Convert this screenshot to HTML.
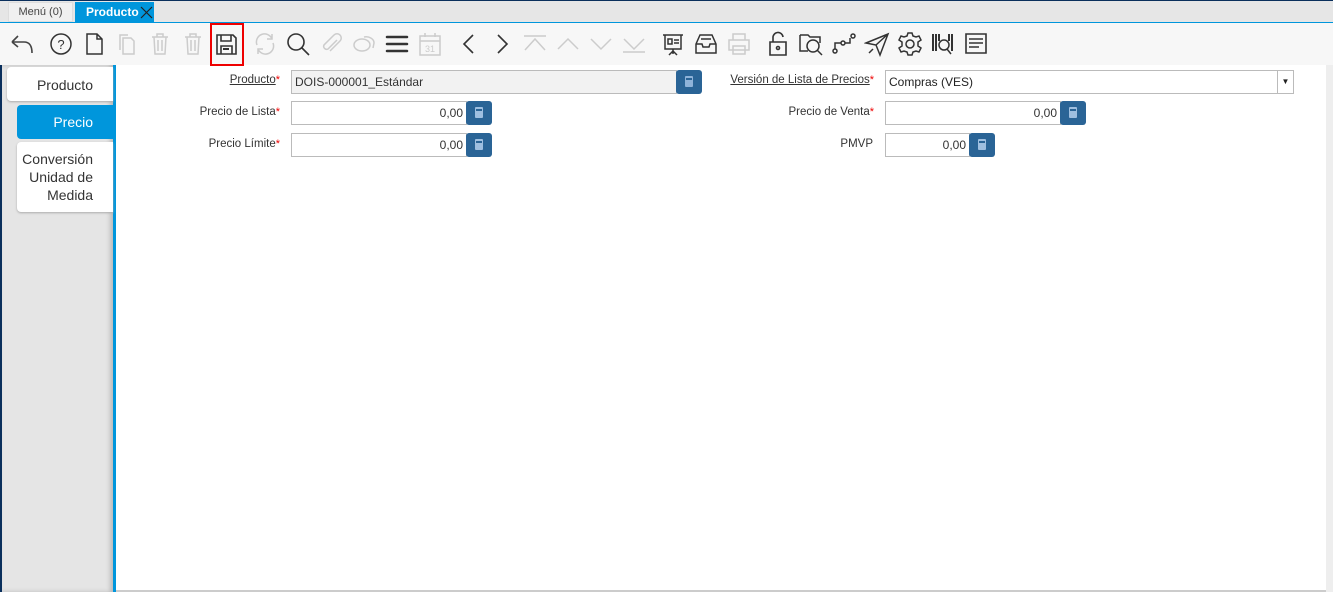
<!DOCTYPE html>
<html><head><meta charset="utf-8"><style>
*{box-sizing:border-box;margin:0;padding:0}
body{width:1333px;height:592px;overflow:hidden;background:#fff;font-family:"Liberation Sans",sans-serif;font-size:12px;color:#333;position:relative}
.a{position:absolute}
.tb svg{position:absolute;width:26px;height:26px;top:31px}
.lbl{position:absolute;text-align:right;font-size:11.5px;color:#333}
.lbl u{text-decoration:underline}
.req{color:#e00;font-size:11px;vertical-align:top}
.fld{position:absolute;border:1px solid #bbb;background:#fff;height:24px;font-size:12px;line-height:22px;padding:0 3px}
.btn{position:absolute;background:#2a6496;border-radius:3px;width:26px;height:24px}
.btn i{position:absolute;left:9px;top:6px;width:8px;height:11px;background:#9fbfe0;border-radius:1px}
.btn i:after{content:"";position:absolute;left:1px;top:2px;width:6px;height:2px;background:#2a6496}
</style></head><body>
<div class="a" style="left:0;top:0;width:1333px;height:1px;background:#0a2f5c"></div>
<div class="a" style="left:0;top:1px;width:1333px;height:21px;background:#e6e6e6"></div>
<div class="a" style="left:8px;top:2px;width:65px;height:20px;background:#f0f0f0;border:1px solid #ddd;font-size:11px;line-height:19px;text-align:center;color:#444">Menú (0)</div>
<div class="a" style="left:75px;top:2px;width:79px;height:20px;background:#0096dc;color:#fff;font-weight:bold;font-size:12px;line-height:20px;padding-left:11px">Producto<svg style="position:absolute;left:65px;top:4px" width="13" height="13" viewBox="0 0 13 13" stroke="#222" stroke-width="1.2"><path d="M1 1 L12 12 M12 1 L1 12"/></svg></div>
<div class="a" style="left:0;top:22px;width:1333px;height:1px;background:#0096dc"></div>
<div class="a" style="left:0;top:23px;width:1333px;height:42px;background:#f7f7f7"></div>
<div class="a" style="left:210px;top:23px;width:34px;height:43px;border:2px solid #e00"></div>
<div class="tb">
<svg style="left:9px" viewBox="0 0 26 26" fill="none" stroke="#444" stroke-width="1.6"><path d="M3 11 L9 5 M3 11 L9 16 M3 11 H15 Q23 11 23 22"/></svg>
<svg style="left:48px" viewBox="0 0 26 26" fill="none" stroke="#333" stroke-width="1.5"><circle cx="13" cy="13" r="10"/><text x="13" y="18" font-size="13" text-anchor="middle" fill="#333" stroke="none" font-family="Liberation Sans">?</text></svg>
<svg style="left:81px" viewBox="0 0 26 26" fill="none" stroke="#333" stroke-width="1.5"><path d="M6 3 H16 L21 8 V23 H6 Z M16 3 V8 H21"/></svg>
<svg style="left:114px" viewBox="0 0 26 26" fill="none" stroke="#ccc" stroke-width="1.5"><path d="M9 7 H17 L20 10 V23 H9 Z M6 19 V4 H14"/></svg>
<svg style="left:147px" viewBox="0 0 26 26" fill="none" stroke="#ccc" stroke-width="1.5"><path d="M5 6 H21 M10 6 V3 H16 V6 M7 6 L8 23 H18 L19 6 M11 9 V20 M15 9 V20"/></svg>
<svg style="left:180px" viewBox="0 0 26 26" fill="none" stroke="#ccc" stroke-width="1.5"><path d="M5 6 H21 M10 6 V3 H16 V6 M7 6 L8 23 H18 L19 6 M11 9 V20 M15 9 V20"/></svg>
<svg style="left:213px" viewBox="0 0 26 26" fill="none" stroke="#333" stroke-width="1.6"><path d="M4 4 H20 L23 7 V23 H4 Z M8 4 V10 H18 V4 M8 15 H19 V23 H8 Z"/><path d="M10 18 H16" stroke-width="2"/></svg>
<svg style="left:252px" viewBox="0 0 26 26" fill="none" stroke="#ccc" stroke-width="1.5"><path d="M5 14 A8 8 0 0 1 20 8 M21 12 A8 8 0 0 1 6 18 M20 3 V8 H15 M6 23 V18 H11"/></svg>
<svg style="left:285px" viewBox="0 0 26 26" fill="none" stroke="#333" stroke-width="1.6"><circle cx="11" cy="11" r="8"/><path d="M17 17 L24 24"/></svg>
<svg style="left:318px" viewBox="0 0 26 26" fill="none" stroke="#ccc" stroke-width="1.5"><path d="M19 9 L10 18 A3 3 0 0 1 6 14 L16 4 A4 4 0 0 1 22 10 L12 20"/></svg>
<svg style="left:351px" viewBox="0 0 26 26" fill="none" stroke="#ccc" stroke-width="1.5"><ellipse cx="11" cy="14" rx="8" ry="6"/><path d="M13 6 A8 6 0 0 1 23 12 L22 17"/></svg>
<svg style="left:384px" viewBox="0 0 26 26" fill="none" stroke="#333" stroke-width="2.5"><path d="M3 6 H23 M3 13 H23 M3 20 H23" stroke-linecap="round"/></svg>
<svg style="left:417px" viewBox="0 0 26 26" fill="none" stroke="#ccc" stroke-width="1.5"><path d="M3 5 H23 V24 H3 Z M3 10 H23 M8 2 V6 M18 2 V6"/><text x="13" y="21" font-size="9" text-anchor="middle" fill="#ccc" stroke="none">31</text></svg>
<svg style="left:456px" viewBox="0 0 26 26" fill="none" stroke="#333" stroke-width="1.6"><path d="M17 4 L8 13 L17 22"/></svg>
<svg style="left:489px" viewBox="0 0 26 26" fill="none" stroke="#333" stroke-width="1.6"><path d="M9 4 L18 13 L9 22"/></svg>
<svg style="left:522px" viewBox="0 0 26 26" fill="none" stroke="#ccc" stroke-width="1.5"><path d="M2 5 H24 M3 19 L13 8 L23 19"/></svg>
<svg style="left:555px" viewBox="0 0 26 26" fill="none" stroke="#ccc" stroke-width="1.5"><path d="M3 18 L13 8 L23 18"/></svg>
<svg style="left:588px" viewBox="0 0 26 26" fill="none" stroke="#ccc" stroke-width="1.5"><path d="M3 8 L13 18 L23 8"/></svg>
<svg style="left:621px" viewBox="0 0 26 26" fill="none" stroke="#ccc" stroke-width="1.5"><path d="M2 21 H24 M3 8 L13 18 L23 8"/></svg>
<svg style="left:660px" viewBox="0 0 26 26" fill="none" stroke="#333" stroke-width="1.5"><path d="M3 4 H23 M5 4 V18 H21 V4 M13 18 V23 M9 24 L13 20 L17 24 M8 8 H12 V13 H8 Z M14 9 H19 M14 12 H19"/></svg>
<svg style="left:693px" viewBox="0 0 26 26" fill="none" stroke="#333" stroke-width="1.5"><path d="M3 13 L7 4 H19 L23 13 V22 H3 Z M3 13 H9 L10 16 H16 L17 13 H23 M8 8 H18"/></svg>
<svg style="left:726px" viewBox="0 0 26 26" fill="none" stroke="#ccc" stroke-width="1.5"><path d="M7 9 V3 H19 V9 M3 9 H23 V19 H3 Z M7 15 H19 V23 H7 Z"/></svg>
<svg style="left:765px" viewBox="0 0 26 26" fill="none" stroke="#333" stroke-width="1.6"><path d="M5 11 H21 V24 H5 Z M8 11 V7 A5 5 0 0 1 18 6"/><circle cx="13" cy="17" r="1.5"/></svg>
<svg style="left:798px" viewBox="0 0 26 26" fill="none" stroke="#333" stroke-width="1.5"><path d="M2 4 H10 L12 6 H22 V12 M2 4 V20 H10"/><circle cx="15" cy="15" r="6"/><path d="M19 19 L24 24"/></svg>
<svg style="left:831px" viewBox="0 0 26 26" fill="none" stroke="#333" stroke-width="1.5"><circle cx="4" cy="20" r="2"/><circle cx="12" cy="12" r="2"/><circle cx="22" cy="5" r="2"/><path d="M4 18 V12 H10 M14 12 H19 V7"/></svg>
<svg style="left:864px" viewBox="0 0 26 26" fill="none" stroke="#333" stroke-width="1.5"><path d="M2 12 L24 3 L16 24 L12 14 Z M12 14 L24 3 M5 22 L9 18"/></svg>
<svg style="left:897px" viewBox="0 0 26 26" fill="none" stroke="#333" stroke-width="1.5"><circle cx="13" cy="13" r="4"/><path d="M11 2 H15 L16 5 L19 6 L22 5 L24 9 L21 11 V15 L24 17 L22 21 L19 20 L16 21 L15 24 H11 L10 21 L7 20 L4 21 L2 17 L5 15 V11 L2 9 L4 5 L7 6 L10 5 Z"/></svg>
<svg style="left:930px" viewBox="0 0 26 26" fill="none" stroke="#333" stroke-width="2"><path d="M3 3 V20 M6 3 V20 M9 3 V10 M19 3 V10 M22 3 V20"/><circle cx="14" cy="14" r="5" stroke-width="1.5"/><path d="M17 18 L21 23" stroke-width="1.5"/></svg>
<svg style="left:963px" viewBox="0 0 26 26" fill="none" stroke="#333" stroke-width="1.6"><path d="M3 3 H23 V22 H3 Z M6 8 H20 M6 12 H20 M6 16 H16"/></svg>
</div>
<div class="a" style="left:0;top:65px;width:2px;height:527px;background:#0a2f5c"></div>
<div class="a" style="left:2px;top:65px;width:111px;height:527px;background:#e5e5e5;box-shadow:inset -3px 0 4px #bbb"></div>
<div class="a" style="left:113px;top:65px;width:3px;height:527px;background:#0096dc"></div>
<div class="a" style="left:7px;top:67px;width:106px;height:34px;background:#fff;border-radius:4px 0 0 4px;box-shadow:0 1px 2px #aaa;font-size:14px;line-height:36px;text-align:right;padding-right:20px;color:#333">Producto</div>
<div class="a" style="left:17px;top:105px;width:96px;height:34px;background:#0096dc;border-radius:4px 0 0 4px;font-size:14px;line-height:34px;text-align:right;padding-right:20px;color:#fff">Precio</div>
<div class="a" style="left:17px;top:142px;width:96px;height:70px;background:#fff;border-radius:4px 0 0 4px;box-shadow:0 1px 2px #aaa;font-size:14px;line-height:18px;text-align:right;padding:8px 20px 0 0;color:#333">Conversión<br>Unidad de<br>Medida</div>
<div class="a" style="left:1326px;top:65px;width:7px;height:527px;background:#eee"></div>
<div class="a" style="left:116px;top:590px;width:1210px;height:2px;background:#ccc"></div>
<div class="lbl" style="left:120px;width:160px;top:74px"><u>Producto</u><span class="req">*</span></div>
<div class="fld" style="left:291px;top:70px;width:386px;background:#f2f2f2">DOIS-000001_Estándar</div>
<div class="btn" style="left:676px;top:70px"><i style="background:#8fb3d9"></i></div>
<div class="lbl" style="left:120px;width:160px;top:106px">Precio de Lista<span class="req">*</span></div>
<div class="fld" style="left:291px;top:101px;width:176px;text-align:right">0,00</div>
<div class="btn" style="left:466px;top:101px"><i></i></div>
<div class="lbl" style="left:120px;width:160px;top:138px">Precio Límite<span class="req">*</span></div>
<div class="fld" style="left:291px;top:133px;width:176px;text-align:right">0,00</div>
<div class="btn" style="left:466px;top:133px"><i></i></div>
<div class="lbl" style="left:660px;width:214px;top:74px"><u>Versión de Lista de Precios</u><span class="req">*</span></div>
<div class="fld" style="left:885px;top:70px;width:409px;color:#222">Compras (VES)<span style="position:absolute;right:0;top:-1px;width:16px;height:24px;border-left:1px solid #bbb;border-radius:0 3px 3px 0;font-size:8px;text-align:center;line-height:24px">▼</span></div>
<div class="lbl" style="left:660px;width:214px;top:106px">Precio de Venta<span class="req">*</span></div>
<div class="fld" style="left:885px;top:101px;width:176px;text-align:right">0,00</div>
<div class="btn" style="left:1060px;top:101px"><i></i></div>
<div class="lbl" style="left:660px;width:213px;top:138px">PMVP</div>
<div class="fld" style="left:885px;top:133px;width:85px;text-align:right">0,00</div>
<div class="btn" style="left:969px;top:133px"><i></i></div>
</body></html>
